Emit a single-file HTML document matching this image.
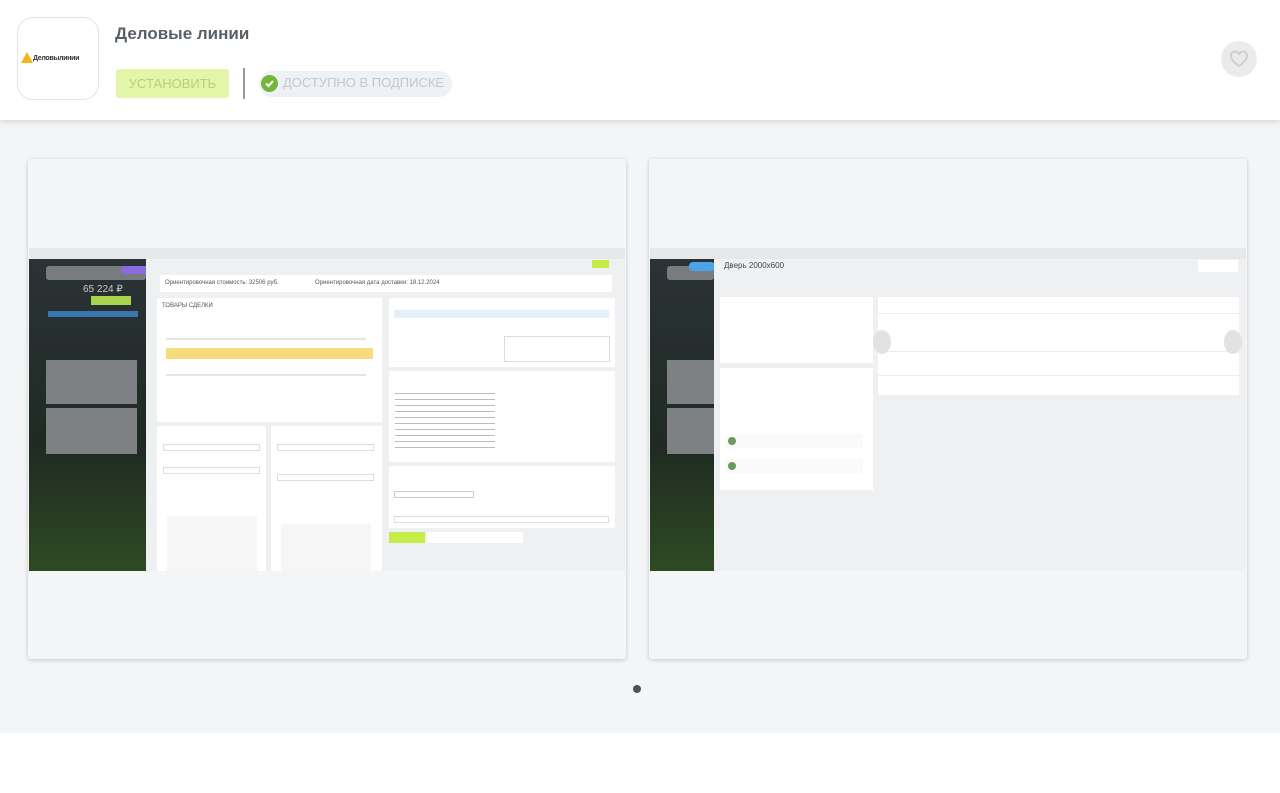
<!DOCTYPE html><html><head><meta charset="utf-8"><style>
*{margin:0;padding:0;box-sizing:border-box}
body{width:1280px;height:793px;overflow:hidden;background:#fff;font-family:"Liberation Sans","Noto Sans CJK SC",sans-serif;position:relative}
.a{position:absolute}
.hdr{left:0;top:0;width:1280px;height:120px;background:#fff;box-shadow:0 2px 6px rgba(0,0,0,.12);z-index:2}
.gray{left:0;top:120px;width:1280px;height:613px;background:#f4f5f7}
.card{background:#f4f5f7;border-radius:3px;box-shadow:0 1px 4px rgba(0,0,0,.2);top:159px;width:598px;height:500px}
.w{background:#fff}
.t{font-size:4px;color:#555;white-space:nowrap}
.ln{height:2px;background:#ccc}
</style></head><body>
<div class="a hdr">
 <div class="a" style="left:17px;top:17px;width:82px;height:83px;border-radius:16px;border:1px solid #e3e3e3;background:#fff">
  <div class="a" style="left:3px;top:34px;width:0;height:0;border-left:6px solid transparent;border-right:6px solid transparent;border-bottom:11px solid #f2b51c"></div>
  <div class="a" style="left:15px;top:37px;font-size:7px;font-weight:bold;color:#333;letter-spacing:-0.3px">Деловылинии</div>
 </div>
 <div class="a" style="left:115px;top:24px;font-size:17px;font-weight:bold;color:#5a6068">Деловые линии</div>
 <div class="a" style="left:116px;top:69px;width:113px;height:29px;background:#e3f5a8;border-radius:3px;color:#b8cf80;font-size:13px;text-align:center;line-height:29px">УСТАНОВИТЬ</div>
 <div class="a" style="left:243px;top:68px;width:2px;height:31px;background:#9a9a9a"></div>
 <div class="a" style="left:259px;top:71px;width:193px;height:26px;background:#eef1f5;border-radius:13px"></div>
 <div class="a" style="left:261px;top:75px;width:17px;height:17px;border-radius:50%;background:#73b63b"></div>
 <svg class="a" style="left:261px;top:75px" width="17" height="17"><path d="M5 8.5l2.5 2.5 4.5-5" stroke="#fff" stroke-width="2" fill="none"/></svg>
 <div class="a" style="left:283px;top:75px;font-size:13px;color:#c3c8cf">ДОСТУПНО В ПОДПИСКЕ</div>
 <div class="a" style="left:1221px;top:41px;width:36px;height:36px;border-radius:50%;background:#ebebeb"></div>
 <svg class="a" style="left:1229px;top:49px" width="20" height="20"><path d="M10 17C3 12 2 9 2 7a4 4 0 0 1 8-1 4 4 0 0 1 8 1c0 2-1 5-8 10z" fill="none" stroke="#cfcfcf" stroke-width="2"/></svg>
</div>
<div class="a gray"></div>

<div class="a card" style="left:28px">
 <div class="a" style="left:1px;top:89px;width:596px;height:11px;background:#e6e8ea"></div>
 <div class="a" style="left:1px;top:100px;width:117px;height:312px;background:linear-gradient(#2b3236,#1f2a22 60%,#2e4a22)"></div>
 <div class="a" style="left:18px;top:107px;width:100px;height:14px;border-radius:3px;background:#9a9c9e;opacity:.7"></div>
 <div class="a" style="left:20px;top:152px;width:90px;height:6px;background:#3d8ad0;opacity:.8"></div>
 <div class="a" style="left:55px;top:125px;font-size:10px;color:#ccc">65 224 ₽</div>
 <div class="a" style="left:18px;top:201px;width:91px;height:44px;background:#7e8183"></div>
 <div class="a" style="left:18px;top:249px;width:91px;height:46px;background:#7e8183"></div>
 <div class="a" style="left:93px;top:107px;width:30px;height:8px;border-radius:4px;background:#8b6be0"></div>
 <div class="a" style="left:63px;top:137px;width:40px;height:9px;background:#a7d44b"></div>
 <div class="a" style="left:118px;top:100px;width:479px;height:312px;background:#eef0f2"></div>
 <div class="a" style="left:564px;top:101px;width:17px;height:8px;background:#c6ec4a"></div>
 <div class="a w" style="left:132px;top:116px;width:452px;height:17px"><div class="a t" style="left:5px;top:5px;font-size:6px">Ориентировочная стоимость: 32506 руб.</div><div class="a t" style="left:155px;top:5px;font-size:6px">Ориентировочная дата доставки: 18.12.2024</div></div>
 <div class="a w" style="left:129px;top:139px;width:225px;height:124px">
  <div class="a t" style="left:5px;top:5px;font-size:6px">ТОВАРЫ СДЕЛКИ</div>
  <div class="a" style="left:9px;top:50px;width:207px;height:11px;background:#f6dc7a"></div>
  <div class="a ln" style="left:9px;top:40px;width:200px;background:#e5e5e5"></div>
  <div class="a ln" style="left:9px;top:76px;width:200px;background:#e5e5e5"></div>
 </div>
 <div class="a w" style="left:361px;top:139px;width:226px;height:69px"><div class="a" style="left:5px;top:12px;width:215px;height:8px;background:#e6effa"></div><div class="a" style="left:115px;top:38px;width:106px;height:26px;border:1px solid #ddd"></div></div>
 <div class="a w" style="left:361px;top:212px;width:226px;height:91px"><div class="a ln" style="left:6px;top:22px;width:100px;height:1px;background:#bbb;box-shadow:0 6px #bbb,0 12px #bbb,0 18px #bbb,0 24px #bbb,0 30px #bbb,0 36px #bbb,0 42px #bbb,0 48px #bbb,0 54px #bbb"></div></div>
 <div class="a w" style="left:361px;top:307px;width:226px;height:62px"><div class="a" style="left:5px;top:25px;width:80px;height:7px;border:1px solid #ccc"></div><div class="a" style="left:5px;top:50px;width:215px;height:7px;border:1px solid #ddd"></div></div>
 <div class="a" style="left:361px;top:373px;width:36px;height:11px;background:#c6ec4a"></div>
 <div class="a w" style="left:399px;top:373px;width:96px;height:11px"></div>
 <div class="a w" style="left:129px;top:267px;width:109px;height:145px"><div class="a" style="left:6px;top:18px;width:97px;height:7px;border:1px solid #ddd"></div><div class="a" style="left:6px;top:41px;width:97px;height:7px;border:1px solid #ddd"></div><div class="a" style="left:10px;top:90px;width:90px;height:55px;background:#f6f6f6"></div></div>
 <div class="a w" style="left:243px;top:267px;width:111px;height:145px"><div class="a" style="left:6px;top:18px;width:97px;height:7px;border:1px solid #ddd"></div><div class="a" style="left:6px;top:48px;width:97px;height:7px;border:1px solid #ddd"></div><div class="a" style="left:10px;top:98px;width:90px;height:47px;background:#f6f6f6"></div></div>
</div>

<div class="a card" style="left:649px">
 <div class="a" style="left:1px;top:89px;width:596px;height:11px;background:#e6e8ea"></div>
 <div class="a" style="left:1px;top:100px;width:64px;height:312px;background:linear-gradient(#2b3236,#1f2a22 60%,#2e4a22)"></div>
 <div class="a" style="left:18px;top:107px;width:47px;height:14px;border-radius:3px;background:#9a9c9e;opacity:.7"></div>
 <div class="a" style="left:18px;top:201px;width:47px;height:44px;background:#7e8183"></div>
 <div class="a" style="left:18px;top:249px;width:47px;height:46px;background:#7e8183"></div>
 <div class="a" style="left:40px;top:103px;width:26px;height:9px;border-radius:4px;background:#4aa3e8"></div>
 <div class="a" style="left:65px;top:100px;width:532px;height:312px;background:#eef0f2"></div>
 <div class="a t" style="left:75px;top:102px;font-size:8px;color:#444">Дверь 2000х600</div>
 <div class="a w" style="left:549px;top:101px;width:40px;height:12px"></div>
 <div class="a w" style="left:71px;top:138px;width:153px;height:66px"></div>
 <div class="a w" style="left:71px;top:209px;width:153px;height:122px"><div class="a" style="left:5px;top:66px;width:138px;height:14px;background:#fafafa"></div><div class="a" style="left:5px;top:91px;width:138px;height:14px;background:#fafafa"></div><div class="a" style="left:8px;top:69px;width:8px;height:8px;border-radius:50%;background:#6a9a60"></div><div class="a" style="left:8px;top:94px;width:8px;height:8px;border-radius:50%;background:#6a9a60"></div></div>
 <div class="a w" style="left:229px;top:138px;width:361px;height:98px"><div class="a ln" style="left:0;top:16px;width:361px;height:1px;background:#eee"></div><div class="a ln" style="left:0;top:54px;width:361px;height:1px;background:#eee"></div><div class="a ln" style="left:0;top:78px;width:361px;height:1px;background:#eee"></div><div class="a" style="left:-5px;top:33px;width:18px;height:24px;border-radius:50%;background:#e2e2e2"></div><div class="a" style="left:346px;top:33px;width:18px;height:24px;border-radius:50%;background:#e2e2e2"></div></div>
</div>
<div class="a" style="left:633px;top:685px;width:8px;height:8px;border-radius:50%;background:#4a525c"></div>
</body></html>
